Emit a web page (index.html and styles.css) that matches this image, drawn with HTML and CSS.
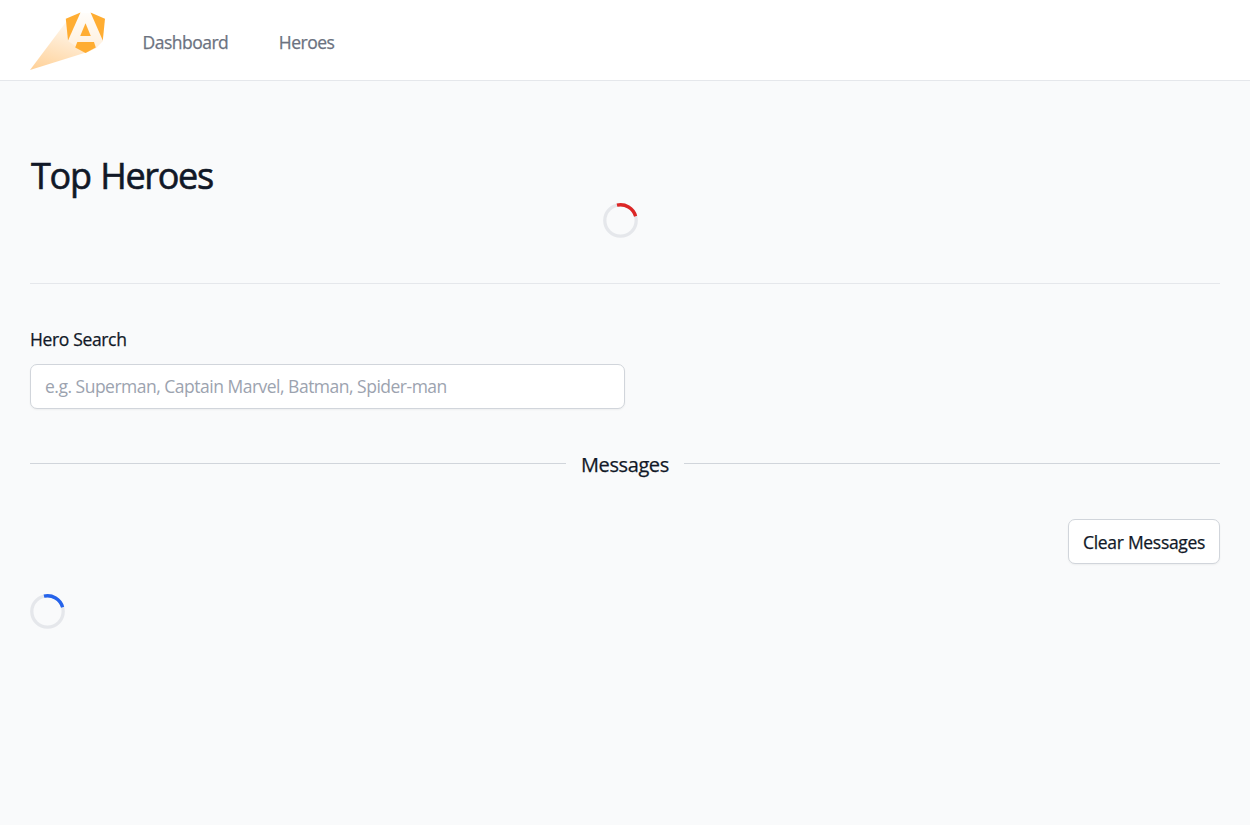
FILE: index.html
```html
<!DOCTYPE html>
<html lang="en">
<head>
<meta charset="utf-8">
<title>Tour of Heroes</title>
<link rel="stylesheet" href="styles.css">
</head>
<body>
<header class="topbar">
  <svg class="logo" viewBox="0 0 76 60" aria-label="Angular">
    <defs>
      <linearGradient id="beam" x1="0" y1="1" x2="0.35" y2="0.1">
        <stop offset="0" stop-color="#ffd096"/>
        <stop offset="1" stop-color="#fff8ef"/>
      </linearGradient>
      <linearGradient id="letter" x1="0" y1="1" x2="0" y2="0">
        <stop offset="0" stop-color="#ffeed9"/>
        <stop offset="1" stop-color="#fffdfa"/>
      </linearGradient>
      <filter id="soft"><feGaussianBlur stdDeviation="0.7"/></filter>
    </defs>
    <g filter="url(#soft)">
      <path fill="url(#beam)" d="M0 59 36 11 55 2 73 30 66 37 56 41.500Z"/>
      <path fill="url(#letter)" d="M50 2H61L73 29 66 37 56 42 38 30Z"/>
      <g fill="#ffad33">
        <path d="M50.500 1.500 35.800 7.700 38 29.500Z"/>
        <path d="M60.500 1.500 75 7.700 72.800 29.500Z"/>
        <path d="M55.500 12.200 60.800 25H50.200Z"/>
        <path d="M47.300 31H64L65.800 36.500 55.500 42 45.200 36.500Z"/>
      </g>
    </g>
  </svg>
  <nav class="nav"><a>Dashboard</a><a>Heroes</a></nav>
</header>
<main class="content">
  <section class="top-heroes">
    <h1 class="title">Top Heroes</h1>
    <svg class="spinner spinner-red" viewBox="0 0 35 35"><circle cx="17.500" cy="17.500" r="15.700"/><path d="M14 2.200A15.700 15.700 0 0 1 32.600 13.200"/></svg>
  </section>
  <section class="search">
    <label class="label" for="q">Hero Search</label>
    <input class="field" id="q" placeholder="e.g. Superman, Captain Marvel, Batman, Spider-man">
  </section>
  <div class="divider"><h2 class="divider-title">Messages</h2></div>
  <div class="actions"><button class="button">Clear Messages</button></div>
  <svg class="spinner spinner-blue" viewBox="0 0 35 35"><circle cx="17.500" cy="17.500" r="15.700"/><path d="M14 2.200A15.700 15.700 0 0 1 32.600 13.200"/></svg>
</main>
</body>
</html>
```
FILE: styles.css
```css
* { box-sizing: border-box; }
body { margin: 0; min-height: 825px; background: #f9fafb; color: #111827; font-family: "Segoe UI", "Open Sans", "Noto Sans", sans-serif; font-size: 17.5px; font-weight: 500; }
.topbar { display: flex; height: 81px; padding: 11px 30px 0; background: #fff; border-bottom: 1px solid #e5e7eb; }
.logo { width: 76px; height: 60px; }
.nav { display: flex; gap: 50.500px; margin-left: 36.500px; padding-top: 19px; line-height: 25px; color: #6b7280; letter-spacing: -0.5px; -webkit-text-stroke: 0.25px; }
.content { padding: 70px 30px 0; }
.top-heroes { height: 133px; border-bottom: 1px solid #e5e7eb; }
.title { margin: 0; padding: 0 0 1px 1px; font-size: 36px; font-weight: 500; line-height: 49px; letter-spacing: -1.300px; word-spacing: 1.500px; -webkit-text-stroke: 0.600px; }
.spinner { display: block; width: 35px; height: 35px; fill: none; stroke-width: 3.300; }
.spinner circle { stroke: #e5e7eb; }
.spinner-red { margin: 2px 0 0 573px; }
.spinner-red path { stroke: #dc2626; }
.spinner-blue { margin-top: 30px; }
.spinner-blue path { stroke: #2563eb; }
.search { padding-top: 43px; }
.label { display: block; line-height: 25px; letter-spacing: -0.350px; -webkit-text-stroke: 0.25px; }
.field { display: block; width: 595px; height: 45px; margin-top: 12px; padding: 0 14px 2px; font: 400 17.500px "Segoe UI", "Open Sans", sans-serif; letter-spacing: -0.5px; background: #fff; border: 1px solid #d1d5db; border-radius: 7px; box-shadow: 0 1px 2px rgb(0 0 0 / 5%); }
.field::placeholder { color: #9ca3af; opacity: 1; }
.divider { display: flex; gap: 15px; height: 35px; margin-top: 37px; align-items: center; }
.divider::before, .divider::after { content: ""; flex: 1; height: 1px; background: #d1d5db; }
.divider-title { width: 88px; margin: 3px 0 0; font-size: 20px; font-weight: 500; line-height: 32px; letter-spacing: -0.400px; white-space: nowrap; -webkit-text-stroke: 0.25px; }
.actions { display: flex; justify-content: flex-end; margin-top: 38px; }
.button { width: 152px; height: 45px; padding: 0 0 0 14px; text-align: left; white-space: nowrap; color: #111827; font: 500 17.500px "Segoe UI", "Open Sans", sans-serif; letter-spacing: -0.3px; -webkit-text-stroke: 0.25px; background: #fff; border: 1px solid #d1d5db; border-radius: 7px; box-shadow: 0 1px 2px rgb(0 0 0 / 5%); }
```
